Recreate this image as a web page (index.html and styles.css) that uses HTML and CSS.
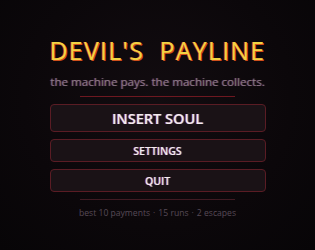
FILE: index.html
```html
<html>
<head>
    <link rel="stylesheet" href="styles.css">
</head>
<body>
    <div class="screen">
        <div class="menu">
            <h1 class="title">DEVIL'S&nbsp; PAYLINE</h1>
            <p class="tagline">the machine pays. the machine collects.</p>
            <div class="rule"></div>
            <button class="btn btn-main">INSERT SOUL</button>
            <button class="btn">SETTINGS</button>
            <button class="btn">QUIT</button>
            <div class="rule rule-dim"></div>
            <p class="stats">best 10 payments<span class="dot">·</span>15 runs<span class="dot">·</span>2 escapes</p>
        </div>
    </div>
</body>
</html>
```

FILE: styles.css
```css
html, body {
    margin: 0;
    padding: 0;
}

body {
    background-color: #0b070a;
    font-family: "Open Sans", sans-serif;
}

.screen {
    width: 315px;
    height: 250px;
    overflow: hidden;
    background: radial-gradient(ellipse at 50% 40%, #120c10 0%, #0b070a 60%, #070507 100%);
}

.menu {
    width: 216px;
    margin: 0 auto;
    padding-top: 32px;
    display: flex;
    flex-direction: column;
    align-items: center;
}

.title {
    margin: 0;
    font-size: 25px;
    font-weight: 500;
    letter-spacing: 1.2px;
    line-height: 36px;
    color: #f2d443;
    white-space: nowrap;
    text-shadow: -1px 0 0 #b81c26, 1px 1px 0 #d0501c;
}

.tagline {
    margin: 5px 0 0;
    font-size: 11.6px;
    line-height: 18px;
    color: #8a7a88;
    white-space: nowrap;
    text-shadow: -1px 0 0 rgba(150, 40, 50, 0.5), 1px 0 0 rgba(60, 80, 140, 0.5);
}

.rule {
    width: 155px;
    height: 1px;
    background-color: #6e1820;
    margin: 5px 0 7px;
}

.rule-dim {
    background-color: #401a22;
    margin: 0 0 6px;
}

.btn {
    width: 216px;
    height: 23px;
    margin: 0 0 7px;
    padding: 0;
    border: 1px solid #5a1c24;
    border-radius: 4px;
    background-color: #1a1216;
    color: #f2ecee;
    font-family: "Open Sans", sans-serif;
    font-size: 10.5px;
    font-weight: 600;
    text-shadow: -1px 0 0 rgba(200, 40, 50, 0.6), 1px 0 0 rgba(60, 120, 220, 0.6);
}

.btn-main {
    height: 28px;
    font-size: 14.5px;
    font-weight: 600;
}

.stats {
    margin: 0;
    font-size: 8.6px;
    line-height: 14px;
    color: #574a57;
    white-space: nowrap;
}

.dot {
    margin: 0 3px;
}
```
